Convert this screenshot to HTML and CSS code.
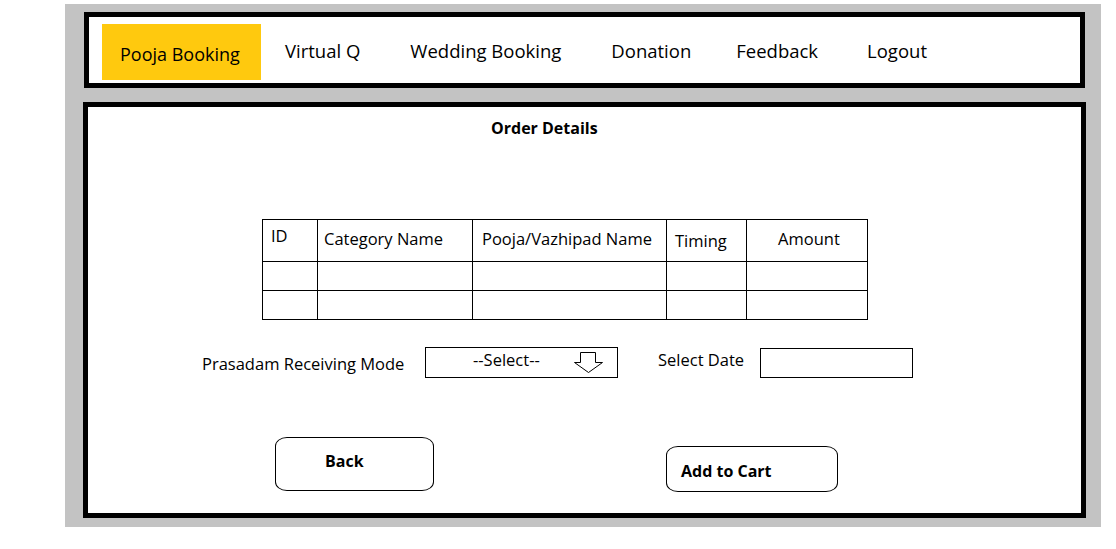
FILE: index.html
```html
<!DOCTYPE html>
<html lang="en">
<head>
<meta charset="utf-8">
<title>Order Details</title>
<link rel="stylesheet" href="styles.css">
</head>
<body>
<div class="frame">
  <nav class="nav">
    <a class="nav-item active">Pooja Booking</a>
    <a class="nav-item first">Virtual Q</a>
    <a class="nav-item">Wedding Booking</a>
    <a class="nav-item">Donation</a>
    <a class="nav-item feedback">Feedback</a>
    <a class="nav-item logout">Logout</a>
  </nav>
  <main class="panel">
    <h1 class="title">Order Details</h1>
    <div class="grid">
      <div class="cell head th-id">ID</div>
      <div class="cell head">Category Name</div>
      <div class="cell head th-pooja">Pooja/Vazhipad Name</div>
      <div class="cell head th-timing">Timing</div>
      <div class="cell head th-amount last">Amount</div>
      <div class="cell"></div>
      <div class="cell"></div>
      <div class="cell"></div>
      <div class="cell"></div>
      <div class="cell last"></div>
      <div class="cell"></div>
      <div class="cell"></div>
      <div class="cell"></div>
      <div class="cell"></div>
      <div class="cell last"></div>
    </div>
    <div class="form-row">
      <div class="label label-mode">Prasadam Receiving Mode</div>
      <div class="select">
        <span class="select-text">--Select--</span>
        <svg class="arrow" width="30" height="22" viewBox="0 0 30 22">
          <path d="M6.5 0.5 H21.5 V10.5 H28.5 L14.5 20.5 L0.5 10.5 H6.5 Z" fill="#fff" stroke="#000" stroke-width="1"/>
        </svg>
      </div>
      <div class="label label-date">Select Date</div>
      <div class="date-box"></div>
    </div>
    <div class="button-row">
      <button class="btn btn-back">Back</button>
      <button class="btn btn-cart">Add to Cart</button>
    </div>
  </main>
</div>
</body>
</html>
```

FILE: styles.css
```css
* { box-sizing: border-box; }

body {
  margin: 0;
  background: #ffffff;
  font-family: "Open Sans", "Liberation Sans", sans-serif;
  color: #000;
}

.frame {
  margin: 4px 0 0 65px;
  width: 1036px;
  height: 523px;
  background: #c3c3c3;
  padding-top: 8px;
  display: flex;
  flex-direction: column;
}

.nav {
  margin-left: 19px;
  width: 1001px;
  height: 76px;
  border: 5px solid #000;
  background: #fff;
  display: flex;
  align-items: flex-start;
  padding: 7px 0 0 13px;
}

.nav-item {
  font-size: 18.5px;
  line-height: 24px;
  margin-top: 15px;
  margin-left: 50px;
  white-space: nowrap;
}

.nav-item.feedback { margin-left: 45px; }
.nav-item.logout { margin-left: 49px; }

.nav-item.active {
  font-size: 18px;
  margin: 0;
  background: #ffc90e;
  width: 159px;
  height: 56px;
  padding: 18px 0 0 18px;
}

.nav-item.first { margin-left: 24px; }

.panel {
  margin: 14px 0 0 18px;
  width: 1003px;
  height: 416px;
  border: 5px solid #000;
  background: #fff;
  padding-top: 10px;
}

.title {
  margin: 0 0 0 403px;
  font-size: 16px;
  font-weight: 700;
  line-height: 22px;
}

.grid {
  margin: 80px 0 0 174px;
  display: grid;
  grid-template-columns: 55px 155px 194px 80px 122px;
  grid-template-rows: 42px 29px 29px;
  width: 606px;
  border-bottom: 1px solid #000;
}

.cell {
  border-top: 1px solid #000;
  border-left: 1px solid #000;
  font-size: 16.5px;
  line-height: 22px;
  white-space: nowrap;
}

.cell.last { border-right: 1px solid #000; }

.head { padding: 8px 0 0 6px; }
.head.th-id { padding: 5px 0 0 8px; }
.head.th-pooja { padding-left: 9px; }
.head.th-timing { padding: 10px 0 0 8px; }
.head.th-amount { padding: 8px 0 0 4px; text-align: center; }

.form-row {
  margin: 27px 0 0 114px;
  display: flex;
  align-items: flex-start;
  height: 31px;
}

.label {
  font-size: 16.5px;
  line-height: 22px;
  white-space: nowrap;
}

.label-mode { width: 223px; margin-top: 6px; }
.label-date { width: 102px; margin: 2px 0 0 40px; }

.select {
  width: 193px;
  height: 31px;
  border: 1px solid #000;
  display: flex;
  align-items: flex-start;
  padding: 1px 0 0 47px;
}

.select-text {
  font-size: 16.5px;
  line-height: 22px;
  width: 101px;
}

.arrow { margin-top: 3px; display: block; }

.date-box {
  margin-top: 1px;
  width: 153px;
  height: 30px;
  border: 1px solid #000;
}

.button-row {
  margin: 59px 0 0 187px;
  display: flex;
  align-items: flex-start;
}

.btn {
  display: block;
  font-family: "Open Sans", "Liberation Sans", sans-serif;
  font-size: 16px;
  font-weight: 700;
  line-height: 22px;
  color: #000;
  background: #fff;
  border: 1px solid #000;
  border-radius: 12px / 9px;
  text-align: left;
  margin: 0;
}

.btn-back {
  width: 159px;
  padding: 12px 0 18px 49px;
}

.btn-cart {
  width: 172px;
  margin: 9px 0 0 232px;
  padding: 13px 0 9px 14px;
}
```
